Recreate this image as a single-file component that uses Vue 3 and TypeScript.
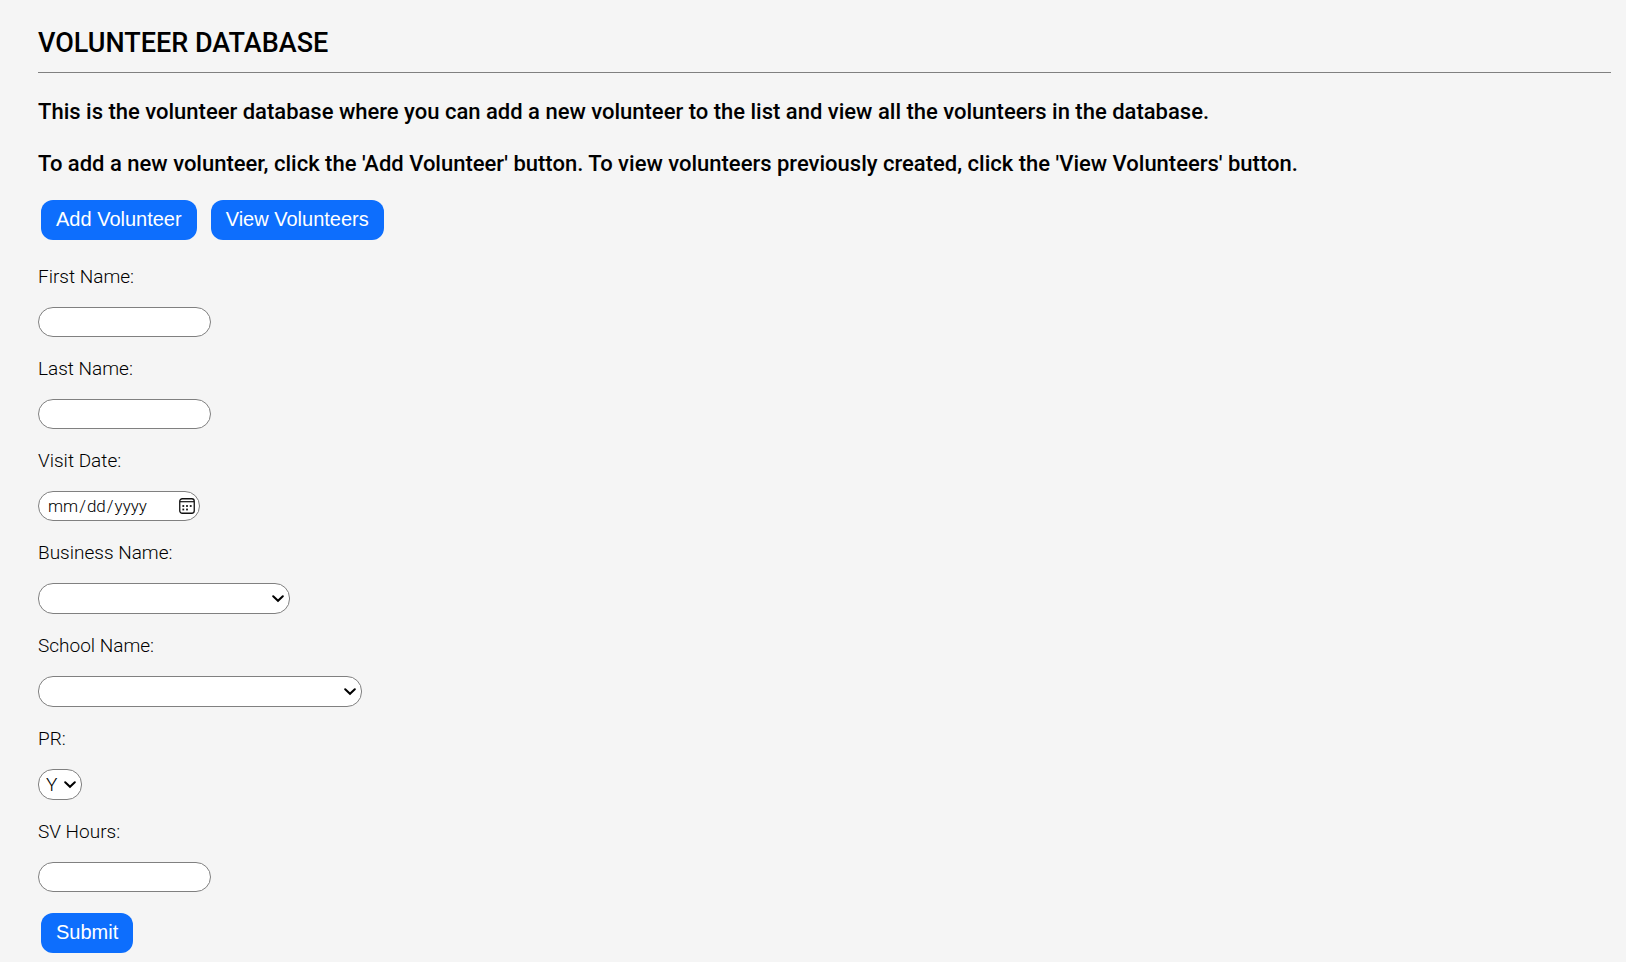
<script setup lang="ts">
import { reactive, ref } from 'vue'

interface Volunteer {
  firstName: string
  lastName: string
  visitDate: string
  business: string
  school: string
  pr: 'Y' | 'N'
  hours: string
}

const form = reactive<Volunteer>({
  firstName: '',
  lastName: '',
  visitDate: '',
  business: '',
  school: '',
  pr: 'Y',
  hours: '',
})
const volunteers = ref<Volunteer[]>([])

function submit(): void {
  volunteers.value.push({ ...form })
}
</script>

<template>
  <main class="page">
    <h1>VOLUNTEER DATABASE</h1>
    <p class="intro">This is the volunteer database where you can add a new volunteer to the list and view all the volunteers in the database.</p>
    <p class="intro">To add a new volunteer, click the 'Add Volunteer' button. To view volunteers previously created, click the 'View Volunteers' button.</p>

    <div class="actions">
      <button type="button" class="btn">Add Volunteer</button>
      <button type="button" class="btn">View Volunteers</button>
    </div>

    <form @submit.prevent="submit">
      <div class="field">
        <label for="first-name">First Name:</label>
        <input id="first-name" v-model="form.firstName" class="control text" type="text" />
      </div>
      <div class="field">
        <label for="last-name">Last Name:</label>
        <input id="last-name" v-model="form.lastName" class="control text" type="text" />
      </div>
      <div class="field">
        <label for="visit-date">Visit Date:</label>
        <span class="wrap date">
          <input id="visit-date" v-model="form.visitDate" class="control" type="date" />
          <svg class="calendar" viewBox="0 0 16 16" aria-hidden="true">
            <rect x="0.75" y="0.75" width="14.5" height="14.5" rx="2.5" fill="none" stroke="#111" stroke-width="1.3" />
            <path d="M1 3.7H15" stroke="#111" stroke-width="1.2" />
            <g fill="#111">
              <rect x="3.4" y="7.1" width="1.8" height="1.8" />
              <rect x="7.1" y="7.1" width="1.8" height="1.8" />
              <rect x="10.8" y="7.1" width="1.8" height="1.8" />
              <rect x="3.4" y="10.6" width="1.8" height="1.8" />
              <rect x="7.1" y="10.6" width="1.8" height="1.8" />
            </g>
          </svg>
        </span>
      </div>
      <div class="field">
        <label for="business">Business Name:</label>
        <span class="wrap business">
          <select id="business" v-model="form.business" class="control">
            <option value=""></option>
          </select>
          <svg class="chevron" viewBox="0 0 12 8" aria-hidden="true"><path d="M1.2 1.2L6 5.8L10.8 1.2" /></svg>
        </span>
      </div>
      <div class="field">
        <label for="school">School Name:</label>
        <span class="wrap school">
          <select id="school" v-model="form.school" class="control">
            <option value=""></option>
          </select>
          <svg class="chevron" viewBox="0 0 12 8" aria-hidden="true"><path d="M1.2 1.2L6 5.8L10.8 1.2" /></svg>
        </span>
      </div>
      <div class="field">
        <label for="pr">PR:</label>
        <span class="wrap pr">
          <select id="pr" v-model="form.pr" class="control">
            <option value="Y">Y</option>
            <option value="N">N</option>
          </select>
          <svg class="chevron" viewBox="0 0 12 8" aria-hidden="true"><path d="M1.2 1.2L6 5.8L10.8 1.2" /></svg>
        </span>
      </div>
      <div class="field">
        <label for="hours">SV Hours:</label>
        <input id="hours" v-model="form.hours" class="control text" type="text" />
      </div>
      <div class="submit">
        <button type="submit" class="btn">Submit</button>
      </div>
    </form>
  </main>
</template>

<style>
body {
  margin: 0;
  background: #f5f5f5;
}
</style>

<style scoped>
.page {
  box-sizing: border-box;
  padding: 24px 15px 9px 38px;
  color: #000;
  font-family: Roboto, 'Liberation Sans', sans-serif;
}

h1 {
  margin: 0 0 21px;
  padding-bottom: 10px;
  border-bottom: 1px solid #808080;
  font-size: 27px;
  font-weight: 500;
  line-height: 38px;
}

.intro {
  margin: 0 0 16px;
  font-size: 22px;
  font-weight: 500;
  line-height: 36px;
}

.actions {
  display: flex;
  gap: 14px;
  padding: 2px 3px 26px;
}

.btn {
  height: 40px;
  padding: 0 15px 2px;
  border: 0;
  border-radius: 12px;
  background: #0d6efd;
  color: #fff;
  font-family: 'Liberation Sans', Arial, sans-serif;
  font-size: 20px;
  line-height: 24px;
}

.field {
  display: flex;
  flex-direction: column;
  align-items: flex-start;
  gap: 19px;
  margin-bottom: 21px;
}

label {
  font-size: 19px;
  font-weight: 300;
  line-height: 22px;
}

.control {
  box-sizing: border-box;
  display: block;
  width: 100%;
  height: 30px;
  margin: 0;
  padding: 0 8px;
  border: 1px solid #808080;
  border-radius: 15px;
  background: #fff;
  color: #000;
  font-family: Roboto, 'Liberation Sans', sans-serif;
  font-size: 17px;
  font-weight: 300;
  appearance: none;
}

.control.text {
  width: 173px;
}

select.control {
  height: 31px;
  padding: 0 7px;
  font-size: 19px;
}

.wrap {
  position: relative;
}

.date {
  width: 162px;
}

.business {
  width: 252px;
}

.school {
  width: 324px;
}

.pr {
  width: 44px;
}

.control::-webkit-calendar-picker-indicator {
  opacity: 0;
}

.calendar {
  position: absolute;
  top: 7px;
  right: 5px;
  width: 16px;
  height: 16px;
  pointer-events: none;
}

.chevron {
  position: absolute;
  top: 12px;
  right: 6px;
  width: 12px;
  height: 8px;
  fill: none;
  stroke: #000;
  stroke-width: 2;
  stroke-linecap: round;
  pointer-events: none;
}

.submit {
  padding: 0 3px;
}
</style>
